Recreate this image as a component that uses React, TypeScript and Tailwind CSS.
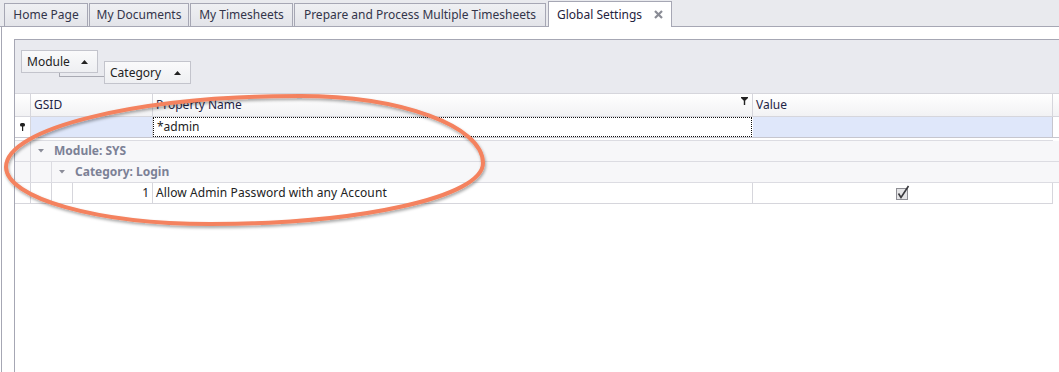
import { FunctionComponent } from "react";

const tabs = [
  { title: "Home Page", w: "w-[84px]" },
  { title: "My Documents", w: "w-[100px]" },
  { title: "My Timesheets", w: "w-[103px]" },
  { title: "Prepare and Process Multiple Timesheets", w: "w-[252px]" },
];

const UpArrow = () => (
  <svg width="7" height="4" viewBox="0 0 7 4" className="shrink-0">
    <polygon points="0,4 7,4 3.5,0" fill="#222" />
  </svg>
);

const DownArrow = () => (
  <svg width="6" height="4" viewBox="0 0 6 4" className="shrink-0">
    <polygon points="0,0 6,0 3,3.5" fill="#8a8c98" />
  </svg>
);

const Funnel = () => (
  <svg width="7" height="8" viewBox="0 0 7 8">
    <polygon points="0,0 7,0 7,1 4.2,3.8 4.2,8 2.8,8 2.8,3.8 0,1" fill="#222" />
  </svg>
);

// little pin shown in the auto-filter row indicator
const Pin = () => (
  <svg width="5" height="8" viewBox="0 0 5 8">
    <rect x="0" y="0" width="5" height="3.5" rx="1.6" fill="#222" />
    <rect x="2" y="3" width="1.2" height="5" fill="#222" />
  </svg>
);

const Close = () => (
  <svg width="9" height="9" viewBox="0 0 9 9">
    <path d="M1 1 L8 8 M8 1 L1 8" stroke="#8a8c95" strokeWidth="2.2" />
  </svg>
);

const CheckBox = () => (
  <svg width="14" height="15" viewBox="0 0 14 15">
    <rect x="0.5" y="3.5" width="11" height="11" fill="#e4e4e6" stroke="#8e8e94" />
    <path d="M2.5 8.5 L5 12.5 L12.5 1" fill="none" stroke="#3a3a3e" strokeWidth="1.6" />
  </svg>
);

const Indicator: FunctionComponent<{ children?: React.ReactNode }> = ({ children }) => (
  <div className="flex w-[16px] shrink-0 items-center justify-center border-r border-[#d6d6dc]">
    {children}
  </div>
);

const App: FunctionComponent = () => {
  return (
    <div className="relative h-[372px] w-[1059px] overflow-hidden bg-white font-['Noto_Sans',sans-serif] text-[12px] text-[#222]">
      {/* tab strip */}
      <div className="flex h-[27px] items-end gap-px border-b border-[#a6a7b4] bg-[#e9eaee] pl-[4px]">
        {tabs.map((tab) => (
          <div
            key={tab.title}
            className={`${tab.w} flex h-[23px] items-center justify-center border border-b-0 border-[#a6a7b4] bg-gradient-to-b from-[#eff0f3] to-[#e3e4e9] text-[#33354a]`}
          >
            {tab.title}
          </div>
        ))}
        <div className="-mb-px ml-px flex h-[26px] w-[124px] items-center gap-[12px] border border-b-0 border-[#a6a7b4] bg-white pl-[8px] text-[#1f2340]">
          <span>Global Settings</span>
          <Close />
        </div>
      </div>

      {/* body */}
      <div className="ml-px h-[345px] border-l border-[#a6a7b4] pl-[12px] pt-[12px]">
        <div className="h-full border-l border-t border-[#a6a7b4]">
          {/* group panel */}
          <div className="relative flex h-[53px] items-start bg-[#e9eaef] pl-[6px] pt-[10px]">
            <div className="absolute left-[44px] top-[33px] h-[4px] w-[45px] border-b border-l border-[#a9aab3]" />
            <div className="relative flex h-[23px] w-[77px] items-center justify-between border border-[#c3c4cc] bg-gradient-to-b from-[#fafafb] to-[#eeeff2] pl-[5px] pr-[9px]">
              <span>Module</span>
              <UpArrow />
            </div>
            <div className="relative ml-[6px] mt-[11px] flex h-[23px] w-[87px] items-center justify-between border border-[#c3c4cc] bg-gradient-to-b from-[#fafafb] to-[#eeeff2] pl-[5px] pr-[9px]">
              <span>Category</span>
              <UpArrow />
            </div>
          </div>

          {/* header */}
          <div className="flex h-[24px] border-y border-[#d6d6dc] bg-gradient-to-b from-white to-[#f2f2f4] text-[#1e2446]">
            <Indicator />
            <div className="flex w-[122px] items-center border-r border-[#d6d6dc] pl-[3px]">GSID</div>
            <div className="flex w-[600px] justify-between border-r border-[#d6d6dc] pl-[3px] pr-[4px]">
              <span className="self-center">Property Name</span>
              <span className="pt-[3px]">
                <Funnel />
              </span>
            </div>
            <div className="flex w-[300px] items-center border-r border-[#d6d6dc] pl-[3px]">Value</div>
          </div>

          {/* filter row */}
          <div className="flex h-[21px] border-b border-[#c6c6ce]">
            <Indicator>
              <Pin />
            </Indicator>
            <div className="w-[122px] border-r border-[#d6d6dc] bg-[#dfe7fa]" />
            <div className="flex w-[599px] items-center border border-dotted border-[#111] bg-white pl-[3px]">
              *admin
            </div>
            <div className="ml-px w-[300px] border-r border-[#c6c6ce] bg-[#dfe7fa]" />
          </div>
          <div className="h-[3px] w-[1038px] border-b border-[#dcdce2]" />

          {/* module group row */}
          <div className="flex h-[21px] border-b border-[#dcdce2] bg-[#f7f7f9]">
            <Indicator />
            <div className="flex items-center pl-[7px] font-bold text-[#7c8196]">
              <DownArrow />
              <span className="ml-[10px]">Module: SYS</span>
            </div>
          </div>

          {/* category group row */}
          <div className="flex h-[21px] border-b border-[#dcdce2] bg-[#f7f7f9]">
            <Indicator />
            <div className="w-[21px] border-r border-[#dcdce2]" />
            <div className="flex items-center pl-[7px] font-bold text-[#7c8196]">
              <DownArrow />
              <span className="ml-[10px]">Category: Login</span>
            </div>
          </div>

          {/* data row */}
          <div className="flex h-[21px] w-[1038px] border-b border-[#d6d6dc]">
            <Indicator />
            <div className="w-[21px] border-r border-[#d6d6dc]" />
            <div className="w-[21px] border-r border-[#d6d6dc]" />
            <div className="flex w-[80px] items-center justify-end border-r border-[#d6d6dc] pr-[3px]">1</div>
            <div className="flex w-[600px] items-center border-r border-[#d6d6dc] pl-[3px] tracking-[0.1px]">
              Allow Admin Password with any Account
            </div>
            <div className="flex w-[300px] items-center justify-center border-r border-[#d6d6dc] pb-[2px]">
              <CheckBox />
            </div>
          </div>
        </div>
      </div>

      {/* annotation ellipse */}
      <svg className="pointer-events-none absolute left-0 top-0" width="1059" height="372">
        <defs>
          <filter id="sh" x="-10%" y="-20%" width="120%" height="140%">
            <feDropShadow dx="1" dy="2" stdDeviation="1.6" floodColor="#000" floodOpacity="0.35" />
          </filter>
        </defs>
        <path
          d="M 6 167 C 6 128, 138 96, 300 96 C 401 96, 483 126, 483 163 C 483 197, 360 224, 210 224 C 97 224, 6 198, 6 167 Z"
          fill="none"
          stroke="#f4825e"
          strokeWidth="4"
          filter="url(#sh)"
        />
      </svg>
    </div>
  );
};

export default App;
